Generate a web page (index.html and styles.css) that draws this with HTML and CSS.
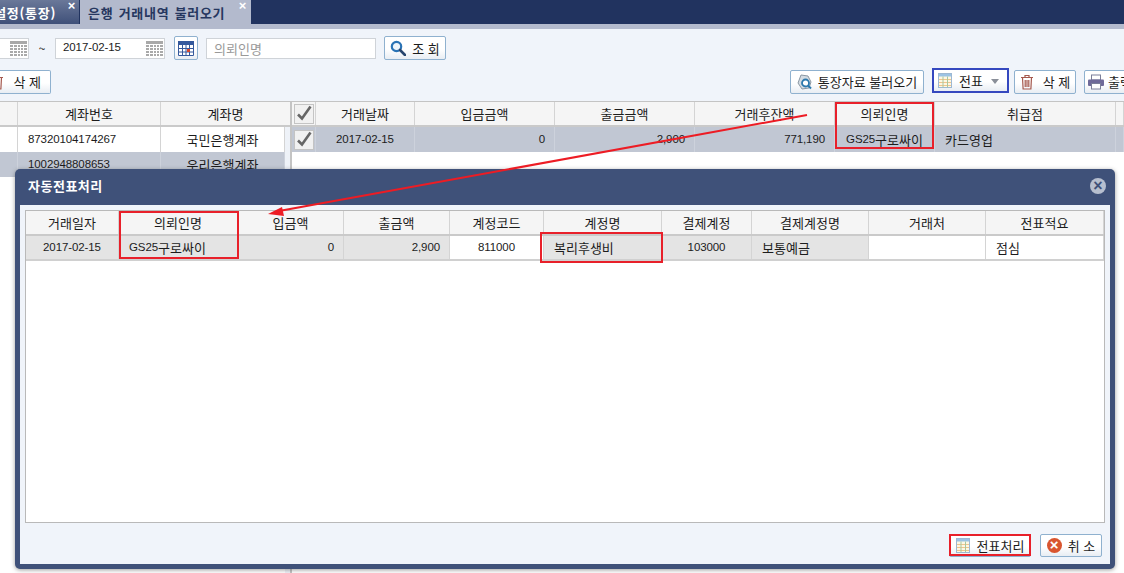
FILE: index.html
```html
<!DOCTYPE html>
<html lang="ko">
<head>
<meta charset="utf-8">
<title>은행 거래내역 불러오기</title>
<link rel="stylesheet" href="styles.css">
</head>
<body>
<svg class="defs" width="0" height="0" aria-hidden="true">
  <symbol id="i-grid" viewBox="0 0 17 15">
    <path fill="#a9a9a9" d="M0 0h17v3H0zM0 4h3v2H0zM4 4h3v2H4zM8 4h2v2H8zM11 4h2v2h-2zM14 4h3v2h-3zM0 7h3v2H0zM4 7h3v2H4zM8 7h2v2H8zM11 7h2v2h-2zM14 7h3v2h-3zM0 10h3v2H0zM4 10h3v2H4zM8 10h2v2H8zM11 10h2v2h-2zM14 10h3v2h-3zM0 13h3v2H0zM4 13h3v2H4zM8 13h2v2H8zM11 13h2v2h-2zM14 13h3v2h-3z"/>
  </symbol>
  <symbol id="i-cal" viewBox="0 0 16 15">
    <rect width="16" height="15" fill="#fff"/>
    <rect width="16" height="4" fill="#34589c"/>
    <path stroke="#34589c" stroke-width="1" fill="none" d="M.5 4v10.5h15V4M4.5 4v11M8 4v11M11.5 4v11M0 7.5h16M0 11h16"/>
    <rect x="9" y="8" width="3" height="3" fill="#d5452e"/>
  </symbol>
  <symbol id="i-search" viewBox="0 0 16 16">
    <circle cx="6.5" cy="6.5" r="4.7" fill="#eef5fb" stroke="#2a73b5" stroke-width="2.2"/>
    <path d="M10 10l5 5" stroke="#27456e" stroke-width="2.6" stroke-linecap="round"/>
  </symbol>
  <symbol id="i-trash" viewBox="0 0 14 16">
    <path fill="none" stroke="#a5584d" stroke-width="1.2" d="M1 3.5h12M5 3V1.5h4V3M2.5 3.5l.6 11.5h7.8l.6-11.5M5.2 6v7M7 6v7M8.8 6v7"/>
  </symbol>
  <symbol id="i-doc" viewBox="0 0 14 15">
    <rect x=".5" y=".5" width="13" height="14" fill="#fdf7e3" stroke="#9db8d3"/>
    <rect x="1" y="1" width="12" height="2.5" fill="#9cc3e4"/>
    <path stroke="#f0c58c" d="M1 6.5h12M1 9.5h12M1 12.5h12"/>
    <path stroke="#a7c7a0" d="M5 3.5v11M9.500 3.500v11"/>
  </symbol>
  <symbol id="i-print" viewBox="0 0 16 15">
    <rect x="3.500" y=".5" width="9" height="5" fill="#fff" stroke="#7b7f99"/>
    <rect y="5" width="16" height="6.500" rx="1" fill="#6f6a99"/>
    <rect x="3.500" y="9" width="9" height="5.500" fill="#fff" stroke="#7b7f99"/>
  </symbol>
  <symbol id="i-load" viewBox="0 0 16 16">
    <path d="M4 1l7 1 3 6-2 6-7 1-4-6z" fill="#d3dbe2" stroke="#8a97a3"/>
    <circle cx="8.500" cy="9" r="3.500" fill="#fff" stroke="#2c79ad" stroke-width="1.800"/>
    <path d="M11 11.500l3 3" stroke="#2c79ad" stroke-width="2"/>
  </symbol>
  <symbol id="i-check" viewBox="0 0 20 20">
    <rect x=".5" y=".5" width="19" height="19" fill="#f1f1f1" stroke="#c4c4c4"/>
    <path d="M4 10.500l4 4 8.500-12" fill="none" stroke="#666" stroke-width="2.600"/>
  </symbol>
</svg>

<header class="tabbar">
  <div class="tab tab-off"><span class="tab-label">설정(통장)</span><span class="tab-x">×</span></div>
  <div class="tab tab-on"><span class="tab-label">은행 거래내역 불러오기</span><span class="tab-x">×</span></div>
</header>
<div class="tabline"></div>

<section class="tools">
  <div class="tool-row row-search">
    <div class="field field-cut"><svg class="ic-grid"><use href="#i-grid"/></svg></div>
    <span class="tilde">~</span>
    <div class="field field-date"><span class="num">2017-02-15</span><svg class="ic-grid"><use href="#i-grid"/></svg></div>
    <button class="btn btn-cal"><svg class="ic-cal"><use href="#i-cal"/></svg></button>
    <div class="field field-name">의뢰인명</div>
    <button class="btn btn-find"><svg class="ic-16"><use href="#i-search"/></svg><span class="spaced">조 회</span></button>
  </div>
  <div class="tool-row row-actions">
    <button class="btn btn-del-cut"><svg class="ic-trash"><use href="#i-trash"/></svg><span class="spaced">삭 제</span></button>
    <div class="actions">
      <button class="btn btn-load"><svg class="ic-16"><use href="#i-load"/></svg><span>통장자료 불러오기</span></button>
      <button class="btn btn-slip"><svg class="ic-doc"><use href="#i-doc"/></svg><span>전표</span><i class="caret"></i></button>
      <button class="btn btn-del"><svg class="ic-trash"><use href="#i-trash"/></svg><span class="spaced">삭 제</span></button>
      <button class="btn btn-print"><svg class="ic-16"><use href="#i-print"/></svg><span>출력</span></button>
    </div>
  </div>
</section>

<main class="panes">
  <section class="pane-left">
    <div class="g g-left g-head">
      <div class="c"></div><div class="c">계좌번호</div><div class="c">계좌명</div>
    </div>
    <div class="g g-left g-row g-inset">
      <div class="c"></div><div class="c c-l"><span class="num">87320104174267</span></div><div class="c">국민은행계좌</div>
    </div>
    <div class="g g-left g-row g-inset g-sel">
      <div class="c"></div><div class="c c-l"><span class="num">1002948808653</span></div><div class="c">우리은행계좌</div>
    </div>
  </section>
  <section class="pane-right">
    <div class="g g-right g-head">
      <div class="c c-check"><svg class="ic-check"><use href="#i-check"/></svg></div>
      <div class="c">거래날짜</div><div class="c">입금금액</div><div class="c">출금금액</div><div class="c">거래후잔액</div><div class="c">의뢰인명</div><div class="c">취급점</div><div class="c"></div>
    </div>
    <div class="g g-right g-row g-sel">
      <div class="c c-check"><svg class="ic-check"><use href="#i-check"/></svg></div>
      <div class="c"><span class="num">2017-02-15</span></div>
      <div class="c c-r"><span class="num">0</span></div>
      <div class="c c-r"><span class="num">2,900</span></div>
      <div class="c c-r"><span class="num">771,190</span></div>
      <div class="c"><span class="num">GS25</span>구로싸이</div>
      <div class="c c-l">카드영업</div>
      <div class="c"></div>
    </div>
  </section>
</main>

<div class="mark mark-head"></div>
<i class="mark mark-slip"></i>

<section class="modal">
  <h2 class="modal-title">자동전표처리<span class="modal-x">×</span></h2>
  <div class="modal-body">
    <div class="m-grid">
      <div class="g g-modal g-head">
        <div class="c">거래일자</div><div class="c">의뢰인명</div><div class="c">입금액</div><div class="c">출금액</div><div class="c">계정코드</div><div class="c">계정명</div><div class="c">결제계정</div><div class="c">결제계정명</div><div class="c">거래처</div><div class="c">전표적요</div>
      </div>
      <div class="g g-modal g-row">
        <div class="c c-grey"><span class="num">2017-02-15</span></div>
        <div class="c c-grey c-l"><span class="num">GS25</span>구로싸이</div>
        <div class="c c-grey c-r"><span class="num">0</span></div>
        <div class="c c-grey c-r"><span class="num">2,900</span></div>
        <div class="c"><span class="num">811000</span></div>
        <div class="c c-grey c-l">복리후생비</div>
        <div class="c c-grey"><span class="num">103000</span></div>
        <div class="c c-grey c-l">보통예금</div>
        <div class="c"></div>
        <div class="c c-l">점심</div>
      </div>
    </div>
    <footer class="m-foot">
      <button class="btn btn-ok"><svg class="ic-doc"><use href="#i-doc"/></svg><span>전표처리</span></button>
      <button class="btn btn-cancel"><span class="x-red">×</span><span class="spaced">취 소</span></button>
    </footer>
  </div>
</section>

<div class="mark mark-m1"></div>
<div class="mark mark-m2"></div>
<div class="mark mark-m3"></div>

<svg class="arrow" width="1124" height="573" aria-hidden="true">
  <path d="M807 115L279 211" stroke="#ed1c24" stroke-width="2" fill="none"/>
  <path d="M268 214L282 207L284 216Z" fill="#ed1c24"/>
</svg>
</body>
</html>
```
FILE: styles.css
```css
* { box-sizing: border-box; }
html, body { margin: 0; height: 573px; overflow: hidden; }
body {
  position: relative;
  width: 1124px;
  background: #fff;
  font: 13px/1 "Noto Sans CJK KR", "Liberation Sans", sans-serif;
  color: #1c1c1c;
  display: flex;
  flex-direction: column;
}
.defs { position: absolute; }
.num { font: 11.5px/1 "Liberation Sans", sans-serif; letter-spacing: -.1px; }

/* tabs */
.tabbar { display: flex; height: 24px; background: #21335f; flex: none; }
.tab { display: flex; position: relative; align-items: center; font-weight: 700; font-size: 13px; letter-spacing: .7px; }
.tab-off {
  width: 79px; margin-right: 1px; justify-content: flex-end; padding-right: 23px;
  background: linear-gradient(#6a7899, #3f5079); color: #fff; overflow: hidden; white-space: nowrap;
}
.tab-on { width: 171px; padding-left: 8px; background: #b3bacd; color: #26375f; word-spacing: 1px; }
.tab-x { position: absolute; right: 3px; top: 0; color: #fff; font: 700 13px/11px "Liberation Sans", sans-serif; }
.tab-on .tab-x { right: 4px; }
.tabline { height: 5px; background: #b3bacd; flex: none; }

/* toolbar */
.tools { background: #f0f4fa; height: 72px; flex: none; }
.tool-row { display: flex; align-items: center; }
.row-search { height: 36px; padding-top: 2px; }
.row-actions { height: 30px; padding-top: 3px; justify-content: space-between; }
.actions { display: flex; align-items: center; margin-right: -14px; }
.field {
  height: 21px; background: #fff; border: 1px solid #cfd3d8;
  display: flex; align-items: center; justify-content: space-between;
}
.field-cut { width: 29px; border-left: 0; justify-content: flex-end; padding-right: 1px; }
.tilde { width: 26px; text-align: center; font-size: 12px; }
.field-date { width: 110px; padding: 0 1px 0 7px; }
.field-name { width: 170px; margin-left: 8px; padding-left: 7px; color: #999; font-size: 13px; }
.ic-grid { width: 17px; height: 15px; }
.ic-cal { width: 16px; height: 15px; display: block; }
.ic-16 { width: 16px; height: 16px; flex: none; }
.ic-trash { width: 14px; height: 16px; flex: none; }
.ic-doc { width: 14px; height: 15px; flex: none; }
.btn {
  height: 24px; padding: 0; display: flex; align-items: center; justify-content: center;
  font: inherit; color: #1c1c1c; white-space: nowrap;
  background: linear-gradient(#fff 0, #fff 55%, #e8edf3 100%);
  border: 1px solid #8fb1cf; border-radius: 2px;
}
.spaced { letter-spacing: 0; }
.btn-cal { width: 24px; margin-left: 9px; }
.btn-find { width: 62px; height: 24px; margin-left: 8px; gap: 6px; }
.btn-del-cut { width: 51px; height: 24px; border-left: 0; justify-content: flex-end; padding-right: 9px; gap: 9px; overflow: hidden; border-radius: 0 2px 2px 0; }
.btn-load { width: 134px; gap: 5px; }
.btn-slip { width: 77px; height: 25px; margin-left: 8px; margin-top: -2px; border: 2px solid #3548bf; border-radius: 0; gap: 7px; justify-content: flex-start; padding-left: 4px; }
.btn-del { width: 62px; margin-left: 5px; gap: 9px; }
.btn-print { width: 54px; margin-left: 8px; gap: 4px; justify-content: flex-start; padding-left: 3px; }
.caret { border: 4px solid transparent; border-top: 5px solid #8a8f99; border-bottom: 0; margin-left: 1px; margin-top: 2px; }

/* panes */
.panes { flex: 1; display: flex; border-top: 1px solid #c4c4c4; min-height: 0; }
.pane-left { width: 290px; flex: none; background: linear-gradient(to right, #fff 285px, #eef2f8 285px); }
.pane-right { flex: 1; border-left: 2px solid #c4c4c4; background: #fff; }
.g { display: grid; }
.g-left { grid-template-columns: 18px 143px 124px; }
.g-head.g-left { grid-template-columns: 18px 143px 129px; }
.g-right { grid-template-columns: 24px 99px 140px 140px 140px 100px 181px 1fr; }
.g-modal { grid-template-columns: 93px 119px 106px 106px 94px 118px 90px 117px 117px 118px; }
.g-head { height: 25px; background: #f5f5f5; border-bottom: 2px solid #cacaca; }
.g-row { height: 25px; background: #fff; }
.g-left.g-head .c:last-child { border-right: 0; }
.g-sel { background: #c1c7d3; height: 25px; }
.g-inset { width: 285px; }
.c {
  display: flex; align-items: center; justify-content: center; min-width: 0;
  border-right: 1px solid #d4d4d4; white-space: nowrap; overflow: hidden; height: 100%;
}
.g-sel .c { border-right-color: #cdd2dc; }
.c-l { justify-content: flex-start; padding-left: 10px; }
.c-r { justify-content: flex-end; padding-right: 9px; }
.c-check { padding: 0 1px; }
.ic-check { width: 20px; height: 20px; }

/* modal */
.modal {
  position: absolute; left: 15px; top: 169px; width: 1100px; height: 400px;
  background: #3f5179; border-radius: 5px; padding: 0 5px 5px;
  display: flex; flex-direction: column; box-shadow: 0 1px 4px rgba(60,60,60,.5);
}
.modal-title {
  position: relative; margin: 0; height: 36px; flex: none; padding: 10px 0 0 8px;
  color: #fff; font-size: 13px; font-weight: 700; letter-spacing: .5px;
}
.modal-x {
  position: absolute; right: 4px; top: 9px; width: 16px; height: 16px; border-radius: 50%;
  background: #b7bfcf; color: #3f5179; font: 700 16px/15px "Liberation Sans", sans-serif; text-align: center; letter-spacing: 0;
}
.modal-body { flex: 1; background: #f0f4fa; padding: 5px; display: flex; flex-direction: column; min-height: 0; }
.m-grid { height: 313px; flex: none; background: #fff; border: 1px solid #b9b9b9; }
.m-grid .g-row { border-bottom: 2px solid #d0d0d0; margin-top: 0; width: 1078px; }
.c-grey { background: #e4e4e4; }
.m-foot { display: flex; justify-content: flex-end; gap: 9px; padding: 11px 3px 0 0; }
.btn-ok { width: 82px; height: 23px; gap: 7px; }
.btn-cancel { width: 62px; height: 23px; gap: 6px; }
.x-red {
  width: 15px; height: 15px; border-radius: 50%; background: #d9552f; color: #fff;
  font: 700 15px/14px "Liberation Sans", sans-serif; text-align: center;
}

/* annotations */
.mark { position: absolute; border: 2px solid #e8202a; pointer-events: none; }
.mark-head { left: 835px; top: 102px; width: 99px; height: 47px; }
.mark-slip { display: none; }
.mark-m1 { left: 119px; top: 211px; width: 120px; height: 48px; }
.mark-m2 { left: 540px; top: 232px; width: 123px; height: 31px; }
.mark-m3 { left: 949px; top: 534px; width: 82px; height: 22px; }
.arrow { position: absolute; left: 0; top: 0; pointer-events: none; }
```
